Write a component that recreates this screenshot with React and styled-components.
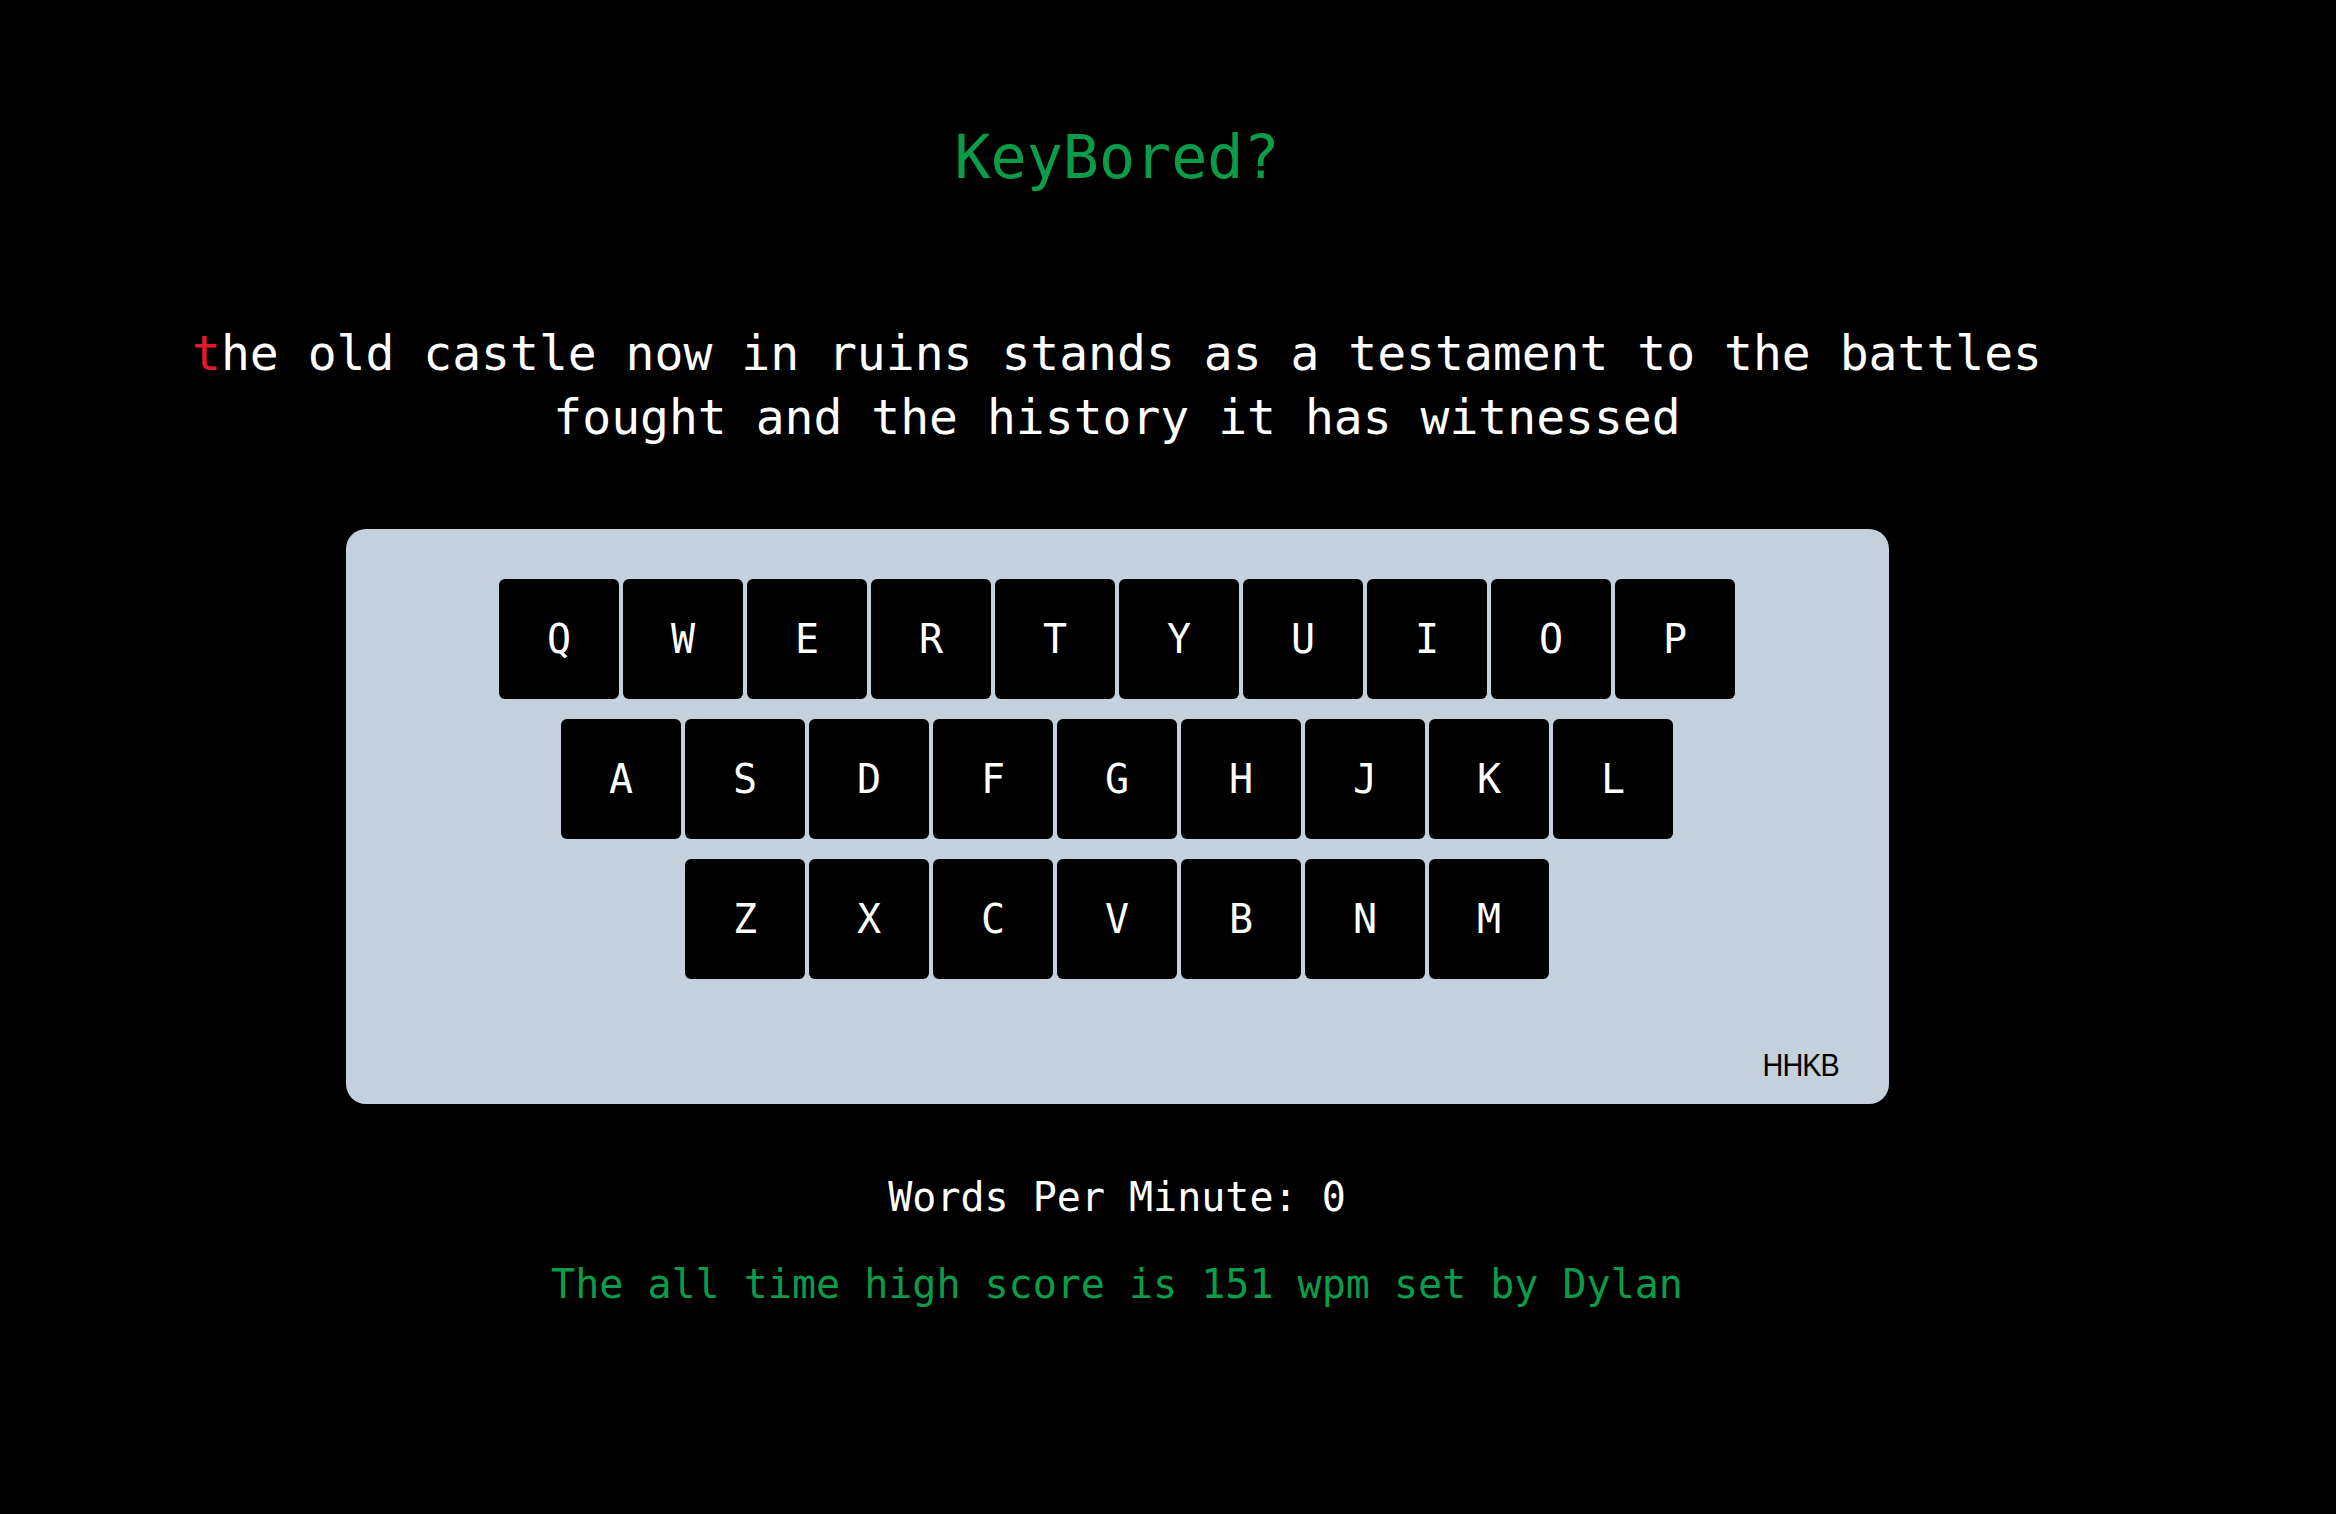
import React from "react";
import styled, { createGlobalStyle } from "styled-components";

const GlobalStyle = createGlobalStyle`
  html, body {
    margin: 0;
    padding: 0;
    background: #000;
  }
  body {
    font-family: "DejaVu Sans Mono", "Liberation Mono", monospace;
    color: #fff;
    min-height: 1514px;
  }
`;

const Page = styled.main`
  width: 2234px;
  display: flex;
  flex-direction: column;
  align-items: center;
  padding-top: 121px;
`;

const Title = styled.h1`
  margin: 0;
  font-size: 60px;
  line-height: 72px;
  font-weight: normal;
  color: #0b9c4a;
`;

const Prompt = styled.p`
  margin: 128px 0 0;
  width: 1950px;
  font-size: 48px;
  line-height: 64px;
  text-align: center;
  color: #fff;
`;

const Char = styled.span`
  color: ${(p) => (p.$state === "current" ? "#e01b2c" : "#fff")};
`;

const Board = styled.section`
  margin-top: 80px;
  width: 1543px;
  box-sizing: border-box;
  padding: 50px 50px 21px;
  background: #c4d0dc;
  border-radius: 20px;
  display: flex;
  flex-direction: column;
`;

const Rows = styled.div`
  display: flex;
  flex-direction: column;
  align-items: center;
  gap: 20px;
`;

const Row = styled.div`
  display: flex;
  gap: 4px;
`;

const Key = styled.div`
  width: 120px;
  height: 120px;
  border-radius: 6px;
  background: #000;
  color: #fff;
  display: flex;
  align-items: center;
  justify-content: center;
  font-size: 40px;
  line-height: 1;
`;

const Brand = styled.div`
  margin-top: 68px;
  align-self: flex-end;
  font-family: "Liberation Sans", Arial, sans-serif;
  font-size: 32px;
  line-height: 36px;
  letter-spacing: -1px;
  color: #000;
  transform: scaleX(0.9);
  transform-origin: right center;
`;

const Stat = styled.div`
  margin-top: ${(p) => p.$gap}px;
  font-size: 40px;
  line-height: 48px;
  color: ${(p) => p.$color};
`;

const rows = ["QWERTYUIOP", "ASDFGHJKL", "ZXCVBNM"];
const sentence =
  "the old castle now in ruins stands as a testament to the battles fought and the history it has witnessed";

export default function App() {
  const position = 0;
  return (
    <>
      <GlobalStyle />
      <Page>
        <Title>KeyBored?</Title>
        <Prompt>
          {sentence.split("").map((c, i) => (
            <Char key={i} $state={i === position ? "current" : "pending"}>
              {c}
            </Char>
          ))}
        </Prompt>
        <Board>
          <Rows>
            {rows.map((r) => (
              <Row key={r}>
                {r.split("").map((k) => (
                  <Key key={k}>{k}</Key>
                ))}
              </Row>
            ))}
          </Rows>
          <Brand>HHKB</Brand>
        </Board>
        <Stat $gap={69} $color="#fff">Words Per Minute: 0</Stat>
        <Stat $gap={39} $color="#0b9c4a">
          The all time high score is 151 wpm set by Dylan
        </Stat>
      </Page>
    </>
  );
}
